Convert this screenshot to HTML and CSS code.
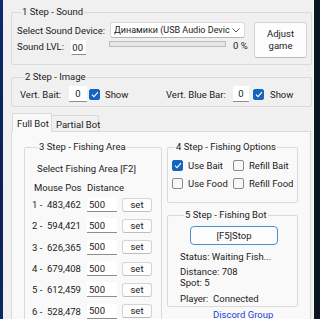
FILE: index.html
```html
<!DOCTYPE html>
<html>
<head>
<meta charset="utf-8">
<link rel="stylesheet" href="styles.css">
</head>
<body>
<div class="desk">
  <div class="strip-left"></div>
  <div class="win">
    <fieldset class="grp g1">
      <legend>1 Step - Sound</legend>
      <div class="g1-body">
        <div class="g1-left">
          <div class="row r-dev">
            <span class="lbl-dev">Select Sound Device:</span>
            <div class="combo"><span class="combo-text">Динамики (USB Audio Devic</span><svg class="chev" width="8" height="5" viewBox="0 0 8 5"><path d="M0.5 0.5 L4 4 L7.5 0.5" fill="none" stroke="#555" stroke-width="1"/></svg></div>
          </div>
          <div class="row r-lvl">
            <span class="lbl-lvl">Sound LVL:</span>
            <div class="tb tb-lvl"><span>100</span></div>
            <div class="prog"></div>
            <span class="pct">0 %</span>
          </div>
        </div>
        <button class="btn adjust">Adjust<br>game</button>
      </div>
    </fieldset>

    <fieldset class="grp g2">
      <legend>2 Step - Image</legend>
      <div class="g2-body">
        <div class="seg seg1">
          <span class="lbl-bait">Vert. Bait:</span>
          <div class="tb tb-num">0</div>
          <span class="cb on"><svg width="8" height="7" viewBox="0 0 8 7"><path d="M1 3.6 L3 5.6 L7 1.2" fill="none" stroke="#fff" stroke-width="1.1"/></svg></span>
          <span class="show">Show</span>
        </div>
        <div class="seg seg2">
          <span class="lbl-blue">Vert. Blue Bar:</span>
          <div class="tb tb-num2">0</div>
          <span class="cb on"><svg width="8" height="7" viewBox="0 0 8 7"><path d="M1 3.6 L3 5.6 L7 1.2" fill="none" stroke="#fff" stroke-width="1.1"/></svg></span>
          <span class="show">Show</span>
        </div>
      </div>
    </fieldset>

    <div class="tabs">
      <div class="tab sel">Full Bot</div>
      <div class="tab">Partial Bot</div>
    </div>
    <div class="page">
      <fieldset class="grp g3">
        <legend>3 Step - Fishing Area</legend>
        <div class="sel-area">Select Fishing Area [F2]</div>
        <div class="hdr"><span class="h-pos">Mouse Pos</span><span>Distance</span></div>
        <div class="spots">
          <div class="spot"><span class="idx">1 -</span><span class="pos">483,462</span><div class="tb tb-dist">500</div><button class="btn set">set</button></div>
          <div class="spot"><span class="idx">2 -</span><span class="pos">594,421</span><div class="tb tb-dist">500</div><button class="btn set">set</button></div>
          <div class="spot"><span class="idx">3 -</span><span class="pos">626,365</span><div class="tb tb-dist">500</div><button class="btn set">set</button></div>
          <div class="spot"><span class="idx">4 -</span><span class="pos">679,408</span><div class="tb tb-dist">500</div><button class="btn set">set</button></div>
          <div class="spot"><span class="idx">5 -</span><span class="pos">612,459</span><div class="tb tb-dist">500</div><button class="btn set">set</button></div>
          <div class="spot"><span class="idx">6 -</span><span class="pos">528,478</span><div class="tb tb-dist">500</div><button class="btn set">set</button></div>
        </div>
      </fieldset>
      <div class="rcol">
        <fieldset class="grp g4">
          <legend>4 Step - Fishing Options</legend>
          <div class="opts">
            <div class="opt"><span class="cb on"><svg width="8" height="7" viewBox="0 0 8 7"><path d="M1 3.6 L3 5.6 L7 1.2" fill="none" stroke="#fff" stroke-width="1.1"/></svg></span><span>Use Bait</span></div>
            <div class="opt"><span class="cb"></span><span>Refill Bait</span></div>
            <div class="opt"><span class="cb"></span><span>Use Food</span></div>
            <div class="opt"><span class="cb"></span><span>Refill Food</span></div>
          </div>
        </fieldset>
        <fieldset class="grp g5">
          <legend>5 Step - Fishing Bot</legend>
          <button class="btn stop">[F5]Stop</button>
          <div class="status">Status: Waiting Fish...</div>
          <div class="dist">Distance: 708</div>
          <div class="spotn">Spot: 5</div>
          <div class="player">Player:&nbsp; Connected</div>
        </fieldset>
        <a class="discord">Discord Group</a>
      </div>
    </div>
  </div>
  <div class="strip-right"></div>
</div>
</body>
</html>
```
FILE: styles.css
```css
* { box-sizing: border-box; }
html, body { margin: 0; padding: 0; }
body {
  width: 320px;
  height: 319px;
  overflow: hidden;
  background: #f0f0f0;
  font-family: Roboto, "Noto Sans", sans-serif;
  font-size: 9.5px;
  color: #1b1b1b;
}
.desk { display: flex; height: 319px; }
.strip-left { width: 3px; background: linear-gradient(#0d2a6e, #0a1f55 60%, #0b2660); }
.strip-right { width: 7px; background: #0c1622; border-left: 1px solid #f7f7f7; }
.win { flex: 1; background: #f0f0f0; padding: 6px 1px 0 8px; overflow: hidden; }

.grp {
  margin: 0;
  border: 1px solid #dadada;
  border-radius: 2px;
  padding: 0;
  min-width: 0;
}
.grp legend {
  padding: 0 1px;
  margin-left: 4px;
  line-height: 12px;
  font-size: 9.5px;
  white-space: nowrap;
}

/* group 1 */
.g1 { padding: 4px 3px 6px 5px; }
.g1-body { display: flex; gap: 4px; }
.g1-left { width: 233px; display: flex; flex-direction: column; gap: 2px; }
.row { display: flex; align-items: center; }
.lbl-dev { width: 93px; white-space: nowrap; }
.combo {
  width: 135px; height: 16px;
  background: #fff;
  border: 1px solid #d9d9d9;
  border-bottom-color: #b5b5b5;
  border-radius: 3px;
  display: flex; align-items: center;
  padding: 0 4px 0 3px;
  overflow: hidden;
}
.combo-text { flex: 1; white-space: nowrap; overflow: hidden; font-size: 9px; }
.chev { flex: none; margin-left: 1px; }
.r-lvl { align-items: flex-start; height: 15px; }
.lbl-lvl { width: 54px; line-height: 13px; white-space: nowrap; }
.tb {
  background: #fff;
  border-bottom: 1px solid #8d8d8d;
  display: flex; align-items: center;
  overflow: hidden;
  white-space: nowrap;
}
.tb-lvl { width: 15px; height: 15px; justify-content: flex-end; padding-right: 3px; border-left: 1px solid #fff; }
.tb-lvl span { flex: none; }
.prog {
  width: 117px; height: 6px; margin: 1px 0 0 23px;
  background: #e6e6e6; border: 1px solid #bcbcbc;
}
.pct { margin-left: 7px; line-height: 12px; white-space: nowrap; }
.btn {
  font-family: inherit; font-size: 9.5px; color: #1b1b1b;
  background: #fdfdfd;
  border: 1px solid #d4d4d4;
  border-bottom-color: #bdbdbd;
  border-radius: 3px;
  padding: 0;
}
.adjust { width: 53px; height: 36px; line-height: 12px; }

/* group 2 */
.g2 { margin-top: 6px; padding: 3px 0 4px 8px; }
.g2-body { display: flex; }
.seg { display: flex; align-items: center; height: 16px; white-space: nowrap; }
.seg1 { width: 146px; }
.lbl-bait { width: 49px; }
.tb-num { width: 18px; height: 16px; justify-content: center; }
.lbl-blue { width: 67px; }
.tb-num2 { width: 16px; height: 16px; justify-content: center; }
.cb {
  width: 11px; height: 11px;
  border: 1px solid #8a8a8a;
  border-radius: 2px;
  background: #f8f8f8;
  display: inline-flex; align-items: center; justify-content: center;
  margin-left: 2px;
  flex: none;
}
.cb.on { background: #1565c0; border-color: #1565c0; }
.show { margin-left: 5px; }
.seg2 .cb { margin-left: 4px; }
.seg2 .show { margin-left: 6px; }

/* tabs */
.tabs { display: flex; align-items: flex-end; margin-top: 5px; padding-left: 1px; height: 19px; }
.tab {
  height: 16px; padding: 0 4px;
  line-height: 17px;
  border: 1px solid #dadada; border-bottom: none;
  background: #f0f0f0;
  white-space: nowrap;
  flex: none;
}
.tab.sel { height: 19px; width: 40px; background: #f9f9f9; line-height: 20px; margin-bottom: -1px; position: relative; z-index: 1; }
.tab:not(.sel) { width: 47px; border-left: none; }
.page {
  background: #f9f9f9;
  border: 1px solid #dadada;
  height: 200px;
  margin-right: 1px;
  padding: 9px 9px 0 12px;
  display: flex; gap: 5px;
  align-items: flex-start;
}

/* group 3 */
.g3 { width: 138px; height: 200px; padding: 8px 0 0 9px; }
.sel-area { padding-left: 3px; line-height: 16px; white-space: nowrap; }
.hdr { display: flex; line-height: 16px; margin-top: 3px; white-space: nowrap; }
.h-pos { width: 53px; }
.spots { display: flex; flex-direction: column; margin-top: -2px; margin-left: -2px; }
.spot { display: flex; align-items: center; height: 21.3px; white-space: nowrap; }
.idx { width: 15px; }
.pos { width: 40px; }
.tb-dist { width: 30px; height: 15px; padding-left: 2px; }
.set { width: 30px; height: 14px; margin-left: 5px; line-height: 12px; }

/* right column */
.rcol { width: 131px; display: flex; flex-direction: column; }
.g4 { height: 62px; padding: 3px 0 0 3px; }
.opts { display: grid; grid-template-columns: 61px 1fr; grid-auto-rows: 18px; white-space: nowrap; }
.opt { display: flex; align-items: center; }
.opt .cb { margin-left: 1px; margin-right: 5px; }
.g5 { margin-top: 6px; height: 98px; padding: 5px 0 0 12px; }
.stop {
  width: 88px; height: 19px; margin-left: 10px;
  border: 1px solid #4a90d0;
  border-radius: 4px;
  background: #fcfcfc;
}
.status { margin-top: 6px; line-height: 12px; white-space: nowrap; }
.dist { margin-top: 3px; line-height: 12px; }
.spotn { line-height: 10px; }
.player { margin-top: 5px; line-height: 12px; white-space: nowrap; }
.discord { color: #1e3fd6; margin: 2px 0 0 46px; line-height: 12px; white-space: nowrap; }
```
